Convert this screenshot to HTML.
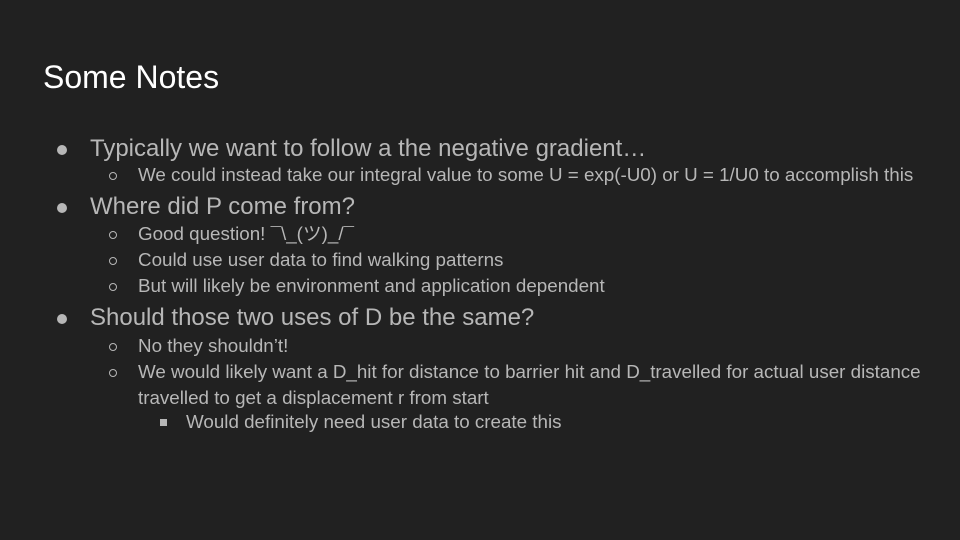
<!DOCTYPE html><html><head><style>
body{margin:0;width:960px;height:540px;background:#212121;position:relative;overflow:hidden;font-family:"Liberation Sans","Noto Sans CJK JP",sans-serif;color:#b7b7b7}
div{position:absolute;line-height:1;white-space:nowrap}
.t{left:43px;top:61px;font-size:32px;color:#fff}
.a{font-size:24px;left:90px}
.b{font-size:18.8px;left:138px}
.c{font-size:18.8px;left:186px}
.d1{position:absolute;left:-33px;top:8px;width:10px;height:10px;border-radius:50%;background:#b7b7b7}
.d2{position:absolute;left:-29px;top:6px;width:8px;height:8px;border-radius:50%;border:1px solid #b7b7b7;box-sizing:border-box}
.d3{position:absolute;left:-26px;top:6px;width:7px;height:7px;background:#b7b7b7}
</style></head><body>
<div class="t">Some Notes</div>
<div class="a" style="top:137px"><span class="d1"></span>Typically we want to follow a the negative gradient…</div>
<div class="b" style="top:166px"><span class="d2"></span>We could instead take our integral value to some U = exp(-U0) or U = 1/U0 to accomplish this</div>
<div class="a" style="top:195px"><span class="d1"></span>Where did P come from?</div>
<div class="b" style="top:225px"><span class="d2"></span>Good question! ¯\_(ツ)_/¯</div>
<div class="b" style="top:251px"><span class="d2"></span>Could use user data to find walking patterns</div>
<div class="b" style="top:277px"><span class="d2"></span>But will likely be environment and application dependent</div>
<div class="a" style="top:306px"><span class="d1"></span>Should those two uses of D be the same?</div>
<div class="b" style="top:337px"><span class="d2"></span>No they shouldn’t!</div>
<div class="b" style="top:363px"><span class="d2"></span>We would likely want a D_hit for distance to barrier hit and D_travelled for actual user distance</div>
<div class="b" style="top:389px">travelled to get a displacement r from start</div>
<div class="c" style="top:413px"><span class="d3"></span>Would definitely need user data to create this</div>
</body></html>
